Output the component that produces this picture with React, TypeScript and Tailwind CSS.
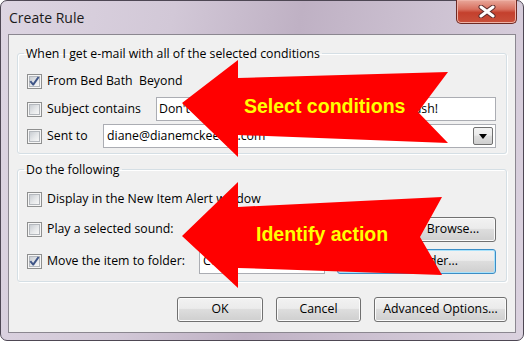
import type { ReactNode } from "react";
import clsx from "clsx";

// Outlook "Create Rule" dialog (Windows 7 Aero look) with the two red callout arrows

function Checkbox({ checked }: { checked?: boolean }) {
  return (
    <span className="flex h-[15px] w-[15px] shrink-0 items-center justify-center border border-[#8e8f8f] bg-[#f6f6f6]">
      <span className="flex h-[11px] w-[11px] items-center justify-center border border-[#b4b8bd] bg-[linear-gradient(135deg,#c9cdd2_0%,#e6e8ea_55%,#f7f7f7_100%)]">
        {checked && (
          <svg width="13" height="13" viewBox="0 0 13 13" className="shrink-0">
            <path d="M2.3 6.2 L5.2 9.6 L10.6 2" fill="none" stroke="#3f5587" strokeWidth="2" strokeLinejoin="round" />
          </svg>
        )}
      </span>
    </span>
  );
}

function Button({ children, className, focused }: { children: ReactNode; className?: string; focused?: boolean }) {
  return (
    <div
      className={clsx(
        "flex h-[25px] shrink-0 items-center justify-center rounded-[3px] border bg-[linear-gradient(#f2f2f2_0%,#ebebeb_45%,#dddddd_50%,#cfcfcf_100%)]",
        focused
          ? "border-[#3c8dc5] shadow-[inset_0_0_0_1px_#a9e2fb]"
          : "border-[#707070] shadow-[inset_0_0_0_1px_#fbfbfb]",
        className,
      )}
    >
      {children}
    </div>
  );
}

function CloseButton() {
  return (
    <div className="-mr-[1px] -mt-[1px] ml-auto flex h-[24px] w-[61px] items-center justify-center rounded-b-[5px] border border-t-0 border-[#6e2a24] bg-[linear-gradient(#e9a89b_0%,#d8705f_40%,#c4402d_55%,#c9503b_100%)] shadow-[inset_0_0_0_1px_#efb2a6]">
      <svg width="18" height="13" viewBox="0 0 18 13">
        <path d="M3 2 L15 11 M15 2 L3 11" stroke="#5a2b2b" strokeWidth="5" strokeLinecap="round" />
        <path d="M3 2 L15 11 M15 2 L3 11" stroke="#ffffff" strokeWidth="3" strokeLinecap="round" />
      </svg>
    </div>
  );
}

function Row({ children, className }: { children: ReactNode; className?: string }) {
  return <div className={clsx("flex items-center", className)}>{children}</div>;
}

function Label({ checked, children, className }: { checked?: boolean; children: ReactNode; className?: string }) {
  return (
    <div className={clsx("flex shrink-0 items-center gap-[5px] whitespace-pre", className)}>
      <Checkbox checked={checked} />
      <span>{children}</span>
    </div>
  );
}

function Arrows() {
  return (
    <>
      <svg className="pointer-events-none absolute inset-0" width="524" height="341" viewBox="0 0 524 341">
        <polygon points="182,103 238,60 238,78 448,72 418,112 448,143 238,135 238,157" fill="#ff0000" />
        <polygon points="182,236 238,182 238,207 442,197 420,237 442,275 238,268 238,288" fill="#ff0000" />
      </svg>
      <div className="pointer-events-none absolute left-[244px] top-[97px] whitespace-nowrap font-['Liberation_Sans',Arial,sans-serif] text-[19.5px] font-bold leading-[19.5px] text-[#ffff00]">
        Select conditions
      </div>
      <div className="pointer-events-none absolute left-[256px] top-[225px] whitespace-nowrap font-['Liberation_Sans',Arial,sans-serif] text-[19.5px] font-bold leading-[19.5px] text-[#ffff00]">
        Identify action
      </div>
    </>
  );
}

export default function App() {
  return (
    <div className="relative h-[341px] w-[524px] overflow-hidden bg-white font-['Open_Sans',sans-serif] text-[12.3px] text-black">
      <div className="flex h-full flex-col rounded-[7px] border border-[#4e4754] bg-[linear-gradient(100deg,#ddd5e2_0%,#d2c8d7_30%,#bfb1c4_52%,#cdc2d2_75%,#dbd2df_100%)] px-[7px] pb-[7px]">
        <div className="flex h-[33px] shrink-0 items-start">
          <span className="pl-[1px] pt-[8px] text-[14px] leading-[18px] text-[#1b1b1b]">Create Rule</span>
          <CloseButton />
        </div>

        <div className="flex flex-1 flex-col border border-[#8b8790] bg-[#f0f0f0] px-[8px]">
          <fieldset className="mt-[10px] rounded-[3px] border border-[#d5dfe5] shadow-[inset_1px_1px_0_#fff,1px_1px_0_#fff]">
            <legend className="ml-[6px] px-[2px] leading-[17px]">When I get e-mail with all of the selected conditions</legend>
            <div className="pb-[5px] pl-[9px] pr-[10px] pt-[7px]">
              <Row className="h-[24px]">
                <Label checked>{"From Bed Bath  Beyond"}</Label>
              </Row>
              <Row className="mt-[4px] h-[24px]">
                <Label className="w-[129px]">Subject contains</Label>
                <div className="flex h-[24px] flex-1 items-center overflow-hidden whitespace-nowrap border border-[#abadb3] bg-white pl-[2px]">
                  Don't miss our big Summer Savings Sales Splash!
                </div>
              </Row>
              <Row className="mt-[3px] h-[24px]">
                <Label className="w-[76px]">Sent to</Label>
                <div className="flex h-[24px] flex-1 items-center border border-[#abadb3] bg-white pl-[3px] pr-[2px]">
                  <span className="flex-1">diane@dianemckeever.com</span>
                  <div className="flex h-[18px] w-[20px] items-center justify-center rounded-[2px] border border-[#707070] bg-[linear-gradient(#f2f2f2_0%,#ebebeb_45%,#dddddd_50%,#cfcfcf_100%)]">
                    <svg width="8" height="5" viewBox="0 0 8 5">
                      <path d="M0 0 H8 L4 5 Z" fill="#000" />
                    </svg>
                  </div>
                </div>
              </Row>
            </div>
          </fieldset>

          <fieldset className="mt-[7px] rounded-[3px] border border-[#d5dfe5] shadow-[inset_1px_1px_0_#fff,1px_1px_0_#fff]">
            <legend className="ml-[6px] px-[2px] leading-[17px]">Do the following</legend>
            <div className="pb-[7px] pl-[9px] pr-[10px] pt-[9px]">
              <Row className="h-[24px]">
                <Label>Display in the New Item Alert window</Label>
              </Row>
              <Row className="mt-[6px] h-[25px]">
                <Label>Play a selected sound:</Label>
                <Button className="ml-auto w-[86px]">Browse...</Button>
              </Row>
              <Row className="mt-[7px] h-[25px]">
                <Label checked className="w-[172px]">Move the item to folder:</Label>
                <div className="flex h-[24px] w-[126px] items-center overflow-hidden whitespace-nowrap border border-[#abadb3] bg-white pl-[3px]">
                  Coupons
                </div>
                <Button focused className="ml-auto w-[159px]">Select Folder...</Button>
              </Row>
            </div>
          </fieldset>

          <div className="mt-[15px] flex justify-end gap-[13px]">
            <Button className="w-[86px]">OK</Button>
            <Button className="w-[85px]">Cancel</Button>
            <Button className="w-[133px]">Advanced Options...</Button>
          </div>
        </div>
      </div>
      <Arrows />
    </div>
  );
}
